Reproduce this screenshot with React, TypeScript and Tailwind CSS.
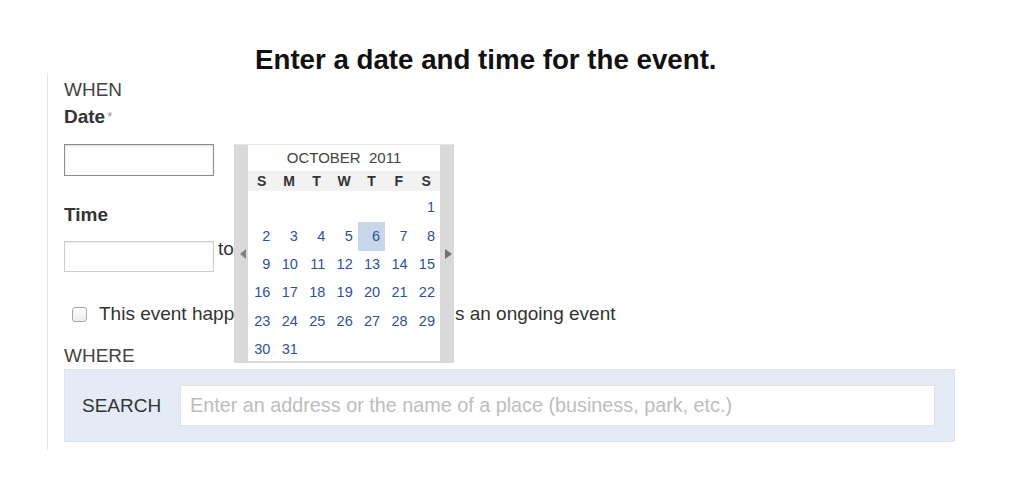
import React from "react";

const rows: (number | null)[][] = [
  [null, null, null, null, null, null, 1],
  [2, 3, 4, 5, 6, 7, 8],
  [9, 10, 11, 12, 13, 14, 15],
  [16, 17, 18, 19, 20, 21, 22],
  [23, 24, 25, 26, 27, 28, 29],
  [30, 31, null, null, null, null, null],
];

function Calendar() {
  return (
    <div className="absolute left-[234px] top-[144px] w-[220px] h-[219px] bg-[#d9d9d9] border-t border-[#e6e6e6] flex px-[14px] pb-[2px]">
      <div className="absolute left-[6px] top-[104px] w-0 h-0 border-y-[5px] border-y-transparent border-r-[6px] border-r-[#808080]" />
      <div className="absolute left-[211px] top-[104px] w-0 h-0 border-y-[5px] border-y-transparent border-l-[7px] border-l-[#707070]" />
      <div className="w-[192px] h-full bg-white overflow-hidden flex flex-col">
        <div className="h-[26px] shrink-0 flex items-center justify-center text-[15px] text-[#444] whitespace-pre">
          {"OCTOBER  2011"}
        </div>
        <div className="h-[20px] shrink-0 bg-[#f2f2f2] grid grid-cols-7 items-center text-[14px] font-bold text-[#333]">
          {["S", "M", "T", "W", "T", "F", "S"].map((d, i) => (
            <div key={i} className="text-center">
              {d}
            </div>
          ))}
        </div>
        <div className="mt-[3px]">
          {rows.map((r, ri) => (
            <div key={ri} className="grid grid-cols-7 h-[28.4px]">
              {r.map((n, ci) => (
                <div
                  key={ci}
                  className={
                    "flex items-center justify-end pr-[5px] text-[14.5px] text-[#2f519a] " +
                    (n === 6 ? "bg-[#c9d5e8]" : "")
                  }
                >
                  {n ?? ""}
                </div>
              ))}
            </div>
          ))}
        </div>
      </div>
    </div>
  );
}

export default function App() {
  return (
    <div className="relative w-[1024px] h-[493px] overflow-hidden bg-white font-['Liberation_Sans',Arial,sans-serif] text-[#333]">
      <h1 className="pl-[255px] pt-[47px] text-[27.7px] leading-[26px] font-bold text-[#111]">
        Enter a date and time for the event.
      </h1>
      <div className="ml-[47px] border-l border-[#e3e3e3] pl-[16px] h-[377px]">
        <div className="pt-[6px] text-[19px] leading-[22px] text-[#444]">WHEN</div>
        <div className="mt-[5px] text-[19px] leading-[22px] font-bold text-[#333]">
          Date<span className="ml-[2px] align-top text-[13px] font-normal text-[#999]">*</span>
        </div>
        <div className="mt-[16px] w-[150px] h-[32px] border border-[#8c8c8c] shadow-[inset_0_1px_2px_rgba(0,0,0,0.15)] bg-white" />
        <div className="mt-[28px] text-[19px] leading-[22px] font-bold text-[#333]">Time</div>
        <div className="mt-[15px] flex items-start">
          <div className="w-[150px] h-[31px] border border-[#cccccc] shadow-[inset_0_1px_1px_rgba(0,0,0,0.08)] bg-white" />
          <span className="ml-[4px] -mt-[3px] text-[19px] leading-[22px] text-[#333]">to</span>
        </div>
        <div className="mt-[31px] flex items-center h-[22px]">
          <div className="ml-[8px] w-[15px] h-[15px] rounded-[3px] border border-[#a8a8a8] bg-gradient-to-b from-white to-[#ececec]" />
          <span className="ml-[12px] text-[19px] leading-[22px] text-[#333] whitespace-nowrap">
            This event happens over multiple days or is an ongoing event
          </span>
        </div>
        <div className="mt-[20px] text-[19px] leading-[22px] text-[#444]">WHERE</div>
        <div className="mt-[2px] w-[891px] h-[73px] bg-[#e4ebf6] border border-[#dae2ee] flex items-center pl-[17px] pr-[19px]">
          <span className="w-[98px] shrink-0 text-[19px] leading-[22px] text-[#333]">SEARCH</span>
          <div className="flex-1 h-[41px] bg-white border border-[#e2e2e2] flex items-center pl-[9px] text-[19.8px] text-[#bdbdbd] whitespace-nowrap">
            Enter an address or the name of a place (business, park, etc.)
          </div>
        </div>
      </div>
      <Calendar />
    </div>
  );
}
